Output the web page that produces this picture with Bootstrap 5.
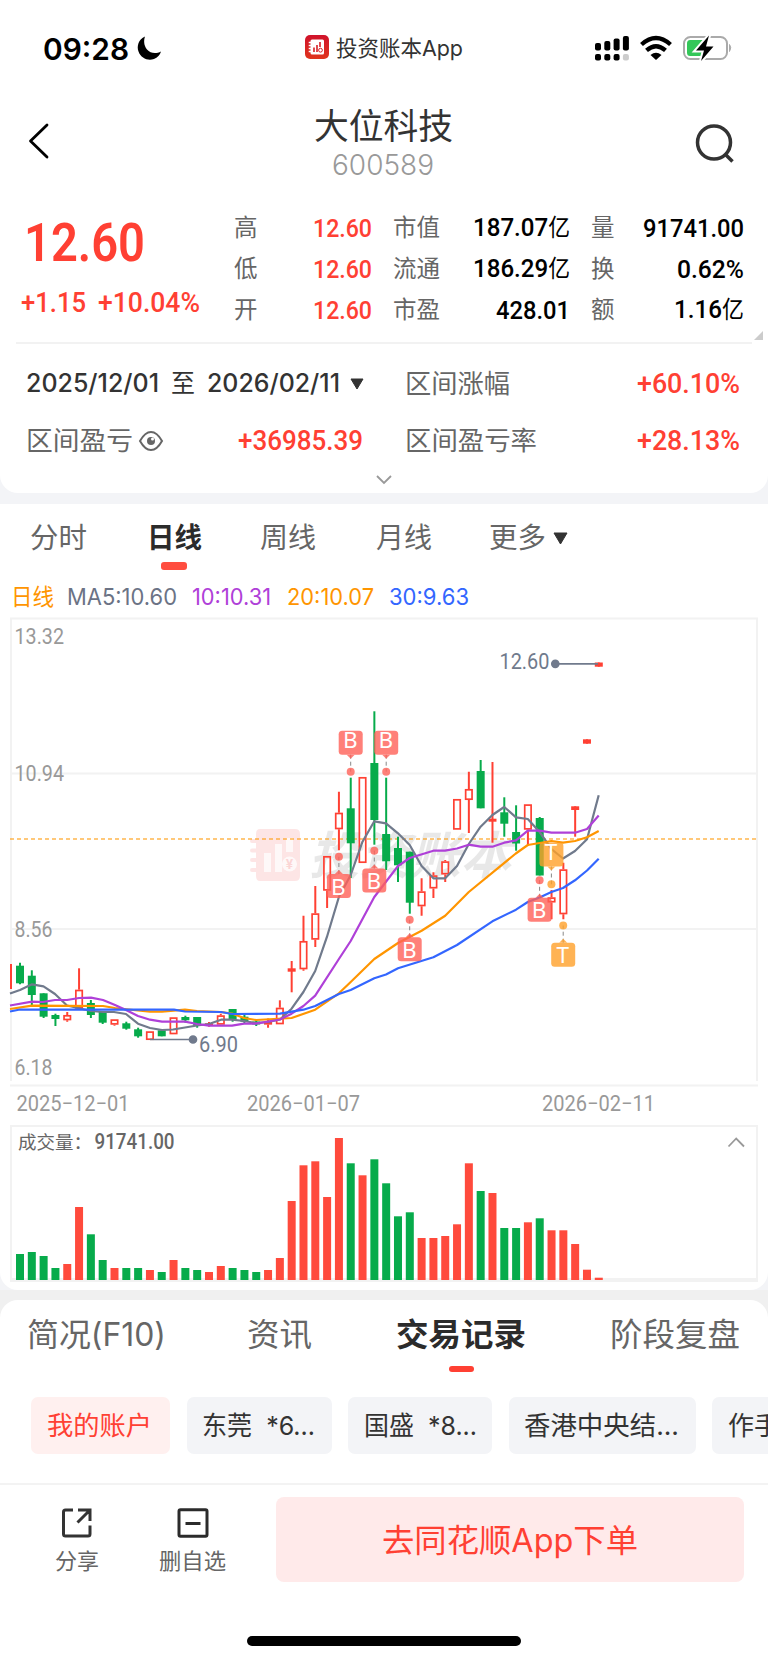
<!DOCTYPE html>
<html lang="zh-CN">
<head>
<meta charset="utf-8">
<meta name="viewport" content="width=device-width, initial-scale=1">
<title>大位科技 600589</title>
<link href="https://cdn.jsdelivr.net/npm/bootstrap@5.3.0/dist/css/bootstrap.min.css" rel="stylesheet">
<style>
:root{--up:#ff4033;--down:#07ab4b;--ink:#333;--mute:#666;--soft:#999}
body{font-family:Inter,"Noto Sans CJK SC",sans-serif;background:#f3f4f7;color:var(--ink);width:768px;height:1663px;overflow:hidden;line-height:1}
svg{display:block;flex:none}
.fit{display:inline-block;white-space:nowrap;transform-origin:0 50%;flex:none}
.num{font-family:Roboto,"Noto Sans CJK SC",sans-serif;font-weight:500}
.up{color:var(--up)}
.line{line-height:40px;height:40px}
.statusbar{height:96px;padding-left:43px;padding-right:35px}
.clock{font-size:30px;font-weight:600;color:#000;padding-top:2px}
.appname{font-size:22px}
.titlebar{height:96px;padding:0 33px 0 28px}
.stockname{font-size:35px;line-height:40px;margin-top:2px}
.stockcode{font-size:28px;line-height:38px;color:var(--soft);font-weight:300}
.panel-top{height:493px;border-radius:0 0 18px 18px}
.quote{height:151px}
.price{font-size:54px;font-weight:600;line-height:60px;margin:21px 0 0 24px}
.change{font-size:28px;gap:12px;margin:16px 0 0 21px}
.quote-left{width:235px}
.quote-grid{display:grid;grid-template-columns:47px 90px 22px 49px 127px 22px 24px 128px;grid-auto-rows:41px;line-height:41px;padding-top:15px;align-items:center;margin-left:-1px}
.quote-grid .k{font-size:23.5px;color:var(--mute)}
.quote-grid .v{font-size:26.5px;color:#000;text-align:right;justify-self:end;margin-right:-1px}
.quote-grid .v.up{color:var(--up)}
.yi{font-size:24px;font-weight:400}
.rule{height:2px;background:#f2f2f2;margin:-1px 16px 0}
.corner{right:5px;top:331px}
.range{display:grid;grid-template-columns:337px 42px 335px;padding-left:26px;height:57px;align-items:center}
.range.first{margin-top:11px}
.range .lbl{font-size:26px;color:var(--mute)}
.range .val{font-size:28px}
.dates{font-size:25px;font-weight:500}
.panel-chart{height:786px;margin-top:11px;border-radius:0 0 18px 18px}
.tabs{height:75px;display:grid;grid-template-columns:117px 113px 116px 113px 1fr;padding-left:30px;font-size:28px;color:var(--mute)}
.tabs>div{height:66px;padding-top:14px}
.tabs .on,.subtabs .on{color:#2b2b2b;font-weight:700}
.tick{width:26px;height:8px;border-radius:3px;background:#ff4d3f;margin:4px 0 0 14px}
.legend-row{height:34px;font-size:23px;line-height:36px;padding-left:11px}
.panel-bottom{height:363px;margin-top:10px;border-radius:18px 18px 0 0}
.panel-gap{background:#f0f0f0}
.subtabs{height:97px;display:grid;grid-template-columns:220px 149px 214px 1fr;padding-left:27px;font-size:32px;color:var(--mute)}
.subtabs>div{padding-top:15px}
.subtabs .tick{width:25px;height:6px;margin:11px 0 0 53px;background:var(--up)}
.chips{gap:16.5px;padding-left:31px;height:57px;width:768px}
.chip{height:57px;line-height:57px;border-radius:7px;background:#f3f4f7;font-size:26px;flex:none;padding-left:15.5px}
.chip.on{background:#fff0ef;color:var(--up)}
.actions{margin-top:29px;border-top:2px solid #f3f3f3;height:99px;padding-left:55px}
.act{font-size:22px;color:var(--mute);padding-top:23px}
.order{width:468px;height:85px;margin-top:12px;border-radius:8px;background:#ffeaea;color:var(--up);font-size:32px;line-height:40px;border:0}
.home{width:274px;height:10px;border-radius:5px;background:#000;margin:54px auto 0 247px}
</style>
</head>
<body>
<section class="panel-top bg-white position-relative">
  <div class="statusbar d-flex align-items-center">
    <span class="clock fit" data-w="86">09:28</span>
    <svg width="26" height="26" viewBox="0 0 26 26" style="margin-left:7px"><path d="M9 1.5C2.5 4.500 .5 11 2.500 16.500C5 23.500 12 26 18 24C21.500 22.700 24 20 25 16.500C20 19 14.500 18.500 11 14.500C7.800 10.500 7.600 5.500 9 1.500Z" fill="#000"/></svg>
    <svg width="24" height="24" viewBox="0 0 24 24" style="margin:-2px 0 0 143px"><defs><linearGradient id="lg" x2="0" y2="1"><stop stop-color="#d0122b"/><stop offset="1" stop-color="#e0341c"/></linearGradient></defs><rect width="24" height="24" rx="5" fill="url(#lg)"/><rect x="5.500" y="4.500" width="13.500" height="15" rx="1.500" fill="#fff"/><path d="M3.700 7.500h3M3.700 10.500h3M3.700 13.500h3M3.700 16.500h3" stroke="#fff" stroke-width="1.300"/><path d="M9 17v-4.500M12 17V10M15 12V7" stroke="#d81f25" stroke-width="1.600"/><circle cx="15.500" cy="15.200" r="1.900" fill="none" stroke="#d81f25"/></svg>
    <span class="appname fit" data-w="127" style="margin-left:7px">投资账本App</span>
    <svg width="138" height="28" viewBox="595 35 138 28" class="ms-auto">
      <g fill="#000"><rect x="595" y="44" width="6" height="7.500" rx="2"/><rect x="604.300" y="42" width="6" height="9.500" rx="2"/><rect x="613.600" y="39.500" width="6" height="12" rx="2"/><rect x="622.900" y="37" width="6" height="14.500" rx="2"/><rect x="595" y="55" width="6" height="6.500" rx="2"/><rect x="604.300" y="55" width="6" height="6.500" rx="2"/><rect x="613.600" y="55" width="6" height="6.500" rx="2"/><rect x="622.900" y="55" width="6" height="6.500" rx="2" fill="#ccc"/></g>
      <g fill="none" stroke="#000" stroke-width="4.300"><path d="M641.500 45.500Q656 32.500 670.500 45.500"/><path d="M646.500 51.300Q656 43 665.500 51.300"/></g><path d="M650.500 56Q656 51.500 661.500 56L656 61Z" fill="#000"/>
      <rect x="684" y="38" width="43" height="22" rx="6.500" fill="none" stroke="#aaa" stroke-width="2"/><path d="M729.500 45.500q2.500 3 0 7z" fill="#aaa" stroke="#aaa"/>
      <path d="M690 41h14v16h-14q-3 0-3-3.500v-9q0-3.500 3-3.500z" fill="#34c759"/>
      <path d="M709 36.500L696 51.500H704L701 62L713.500 47.500H706Z" fill="#000" stroke="#fff" stroke-width="4" paint-order="stroke"/>
    </svg>
  </div>
  <div class="titlebar d-flex justify-content-between align-items-center">
    <svg width="22" height="36" viewBox="0 0 22 36" style="margin-top:-6px"><path d="M19 2L2.500 18L19 34" fill="none" stroke="#000" stroke-width="2.800" stroke-linecap="round" stroke-linejoin="round"/></svg>
    <div class="text-center d-flex flex-column align-items-center" style="margin-left:21px">
      <span class="stockname fit" data-w="139">大位科技</span><span class="stockcode fit" data-w="102">600589</span>
    </div>
    <svg width="40" height="40" viewBox="0 0 40 40"><circle cx="19" cy="18.500" r="16.500" fill="none" stroke="#333" stroke-width="3.500"/><path d="M30.500 30.500L37.500 37.500" stroke="#333" stroke-width="3.500"/></svg>
  </div>
  <div class="quote d-flex">
    <div class="quote-left up num">
      <div class="price"><span class="fit" data-w="121">12.60</span></div>
      <div class="change d-flex"><span class="fit" data-w="65">+1.15</span><span class="fit" data-w="102">+10.04%</span></div>
    </div>
    <div class="quote-grid">
      <span class="k">高</span><span class="v num up fit" data-w="59">12.60</span><span></span><span class="k">市值</span><span class="v num fit" data-w="97">187.07<span class="yi">亿</span></span><span></span><span class="k">量</span><span class="v num fit" data-w="101">91741.00</span>
      <span class="k">低</span><span class="v num up fit" data-w="59">12.60</span><span></span><span class="k">流通</span><span class="v num fit" data-w="97">186.29<span class="yi">亿</span></span><span></span><span class="k">换</span><span class="v num fit" data-w="67">0.62%</span>
      <span class="k">开</span><span class="v num up fit" data-w="59">12.60</span><span></span><span class="k">市盈</span><span class="v num fit" data-w="74">428.01</span><span></span><span class="k">额</span><span class="v num fit" data-w="70">1.16<span class="yi">亿</span></span>
    </div>
  </div>
  <svg class="corner position-absolute" width="9" height="9"><path d="M9 0V9H0Z" fill="#ccc"/></svg>
  <div class="rule"></div>
  <div class="range first">
    <div class="d-flex align-items-center dates"><span class="fit" data-w="133">2025/12/01</span><span class="fit" data-w="24" style="margin:0 12px;font-weight:400">至</span><span class="fit" data-w="133">2026/02/11</span><svg width="14" height="12" style="margin-left:10px"><path d="M1 1H13L7 11Z" fill="#333" stroke="#333" stroke-linejoin="round"/></svg></div><span></span>
    <div class="d-flex justify-content-between align-items-center"><span class="lbl fit" data-w="105">区间涨幅</span><span class="val num up fit" data-w="103">+60.10%</span></div>
  </div>
  <div class="range">
    <div class="d-flex align-items-center"><span class="lbl fit" data-w="107">区间盈亏</span>
      <svg width="26" height="22" viewBox="0 0 26 22" style="margin-left:5px"><path d="M2 11Q7 2 13 2T24 11Q19 20 13 20T2 11Z" fill="none" stroke="#666" stroke-width="2"/><circle cx="13" cy="11" r="4" fill="#666"/><circle cx="14.500" cy="9" r="1.500" fill="#fff"/></svg>
      <span class="val num up fit ms-auto" data-w="125">+36985.39</span></div><span></span>
    <div class="d-flex justify-content-between align-items-center"><span class="lbl fit" data-w="132">区间盈亏率</span><span class="val num up fit" data-w="103">+28.13%</span></div>
  </div>
  <svg width="18" height="10" style="margin:6px auto 0"><path d="M2 1L9 8L16 1" fill="none" stroke="#999" stroke-width="1.800"/></svg>
</section>

<section class="panel-chart bg-white overflow-hidden">
  <div class="tabs line">
    <div><span class="fit" data-w="57">分时</span></div>
    <div><span class="on fit" data-w="55">日线</span><div class="tick"></div></div>
    <div><span class="fit" data-w="56">周线</span></div>
    <div><span class="fit" data-w="56">月线</span></div>
    <div class="d-flex"><span class="fit" data-w="57">更多</span><svg width="15" height="13" style="margin:14px 0 0 7px"><path d="M1 1H14L7.500 12Z" fill="#333" stroke="#333" stroke-linejoin="round"/></svg></div>
  </div>
  <div class="legend-row d-flex">
    <span class="fit" data-w="43" style="color:#ff9500">日线</span>
    <span class="fit" data-w="110" style="color:#6b7385;margin-left:13px">MA5:10.60</span>
    <span class="fit" data-w="79" style="color:#af40d8;margin-left:15px">10:10.31</span>
    <span class="fit" data-w="87" style="color:#ff9500;margin-left:16px">20:10.07</span>
    <span class="fit" data-w="80" style="color:#3366ff;margin-left:15px">30:9.63</span>
  </div>
  <svg id="kline" width="768" height="507" viewBox="0 613 768 507"></svg>
  <svg id="volume" width="768" height="170" viewBox="0 1120 768 170"></svg>
</section>

<div class="panel-gap overflow-hidden"><section class="panel-bottom bg-white overflow-hidden">
  <div class="subtabs line">
    <div><span class="fit" data-w="139">简况(F10)</span></div>
    <div><span class="fit" data-w="65">资讯</span></div>
    <div><span class="on fit" data-w="130">交易记录</span><div class="tick"></div></div>
    <div><span class="fit" data-w="130">阶段复盘</span></div>
  </div>
  <div class="chips d-flex overflow-hidden">
    <div class="chip on" style="width:139px"><span class="fit" data-w="105">我的账户</span></div>
    <div class="chip" style="width:145px"><span class="fit" data-w="113">东莞&nbsp; *6...</span></div>
    <div class="chip" style="width:144px"><span class="fit" data-w="113">国盛&nbsp; *8...</span></div>
    <div class="chip" style="width:187px"><span class="fit" data-w="155">香港中央结...</span></div>
    <div class="chip" style="width:139px"><span class="fit" data-w="104">作手账户</span></div>
  </div>
  <div class="actions d-flex">
    <div class="act d-flex flex-column align-items-center" style="width:44px"><svg width="32" height="30" viewBox="0 0 32 30"><path d="M12 2H4.500Q2.500 2 2.500 4V26Q2.500 28 4.500 28H27Q29 28 29 26V17.500M17 2H29V13M28.500 2.500L16.500 14.500" fill="none" stroke="#333" stroke-width="3"/></svg><span class="fit" data-w="44" style="margin-top:12px">分享</span></div>
    <div class="act d-flex flex-column align-items-center" style="width:67px;margin-left:60px"><svg width="32" height="30" viewBox="0 0 32 30"><rect x="2" y="1.800" width="28" height="26.500" rx="1.500" fill="none" stroke="#2b2b2b" stroke-width="3"/><path d="M8.500 15.500H23.500" stroke="#2b2b2b" stroke-width="3"/></svg><span class="fit" data-w="67" style="margin-top:12px">删自选</span></div>
    <button class="order btn p-0" style="margin-left:50px"><span class="fit" data-w="256" style="margin-top:2px">去同花顺App下单</span></button>
  </div>
  <div class="home"></div>
</section></div>

<script src="https://cdn.jsdelivr.net/npm/bootstrap@5.3.0/dist/js/bootstrap.bundle.min.js"></script>
<script>
// Squeeze or stretch each label to its column width.
document.querySelectorAll('.fit').forEach(el=>{
  el.style.textAlign='left';
  const r=document.createRange();r.selectNodeContents(el);
  const n=r.getBoundingClientRect().width,w=+el.dataset.w;
  el.style.width=w+'px';el.style.transform='scaleX('+w/n+')';
});
const UP='#ff4033',DN='#07ab4b',X=i=>20+11.812*i;
const text=(x,y,w,s,c,o='font-weight="450"')=>`<text x="${x}" y="${y}" textLength="${w}" lengthAdjust="spacingAndGlyphs" font-family="Roboto,sans-serif" font-size="21.500" fill="${c}" ${o}>${s}</text>`;

// [direction, high, top, bottom, low]; u hollow, U filled, d falling
const K=[['d',962.7,965.7,983.3,984.3],['d',970.3,975.7,995,1005.3],['d',993.3,993.3,1016.7,1018],['d',1013.7,1015,1019,1026],['u',1012,1015,1020.3,1021.7],['u',968.3,989.7,1008.7,1008.7],['d',1000,1003,1015,1018],['d',1012,1012,1022.7,1024],['u',1019.3,1019.3,1024.7,1025.7],['d',1021.7,1023.3,1028.7,1029.7],['d',1027.7,1029.3,1036.3,1037.7],['u',1031.3,1031.3,1040,1040],['d',1030.3,1030.3,1036.3,1036.3],['u',1017.3,1017.3,1034.3,1034.3],['d',1015.7,1017,1020.3,1022.7],['d',1017,1017,1026,1027.7],['U',1022,1023.3,1025.7,1026.7],['u',1013.7,1015.3,1024.7,1024.7],['d',1009,1009,1019.7,1021.7],['d',1014.5,1016.7,1021.7,1024],['d',1020,1021.5,1024.5,1026],['u',1018.5,1021.3,1024.6,1027.7],['u',1000.3,1007.7,1024.3,1024.3],['U',961,968.3,971.7,992.3],['u',915.7,941,969.3,970.7],['u',886,913.3,939.7,947],['u',856,856,890.7,908],['u',791.7,812.7,829.3,850.3],['d',777.7,808.3,843.3,878],['u',777,777,863,863],['d',711.3,763,820,844.7],['d',777.7,834,861.3,870],['d',836.7,848,865.3,882],['d',851.7,851.7,902.7,913.7],['u',878.3,891.3,906.3,915.7],['u',872.3,875.3,888.5,898],['u',860,861.3,874.5,882],['u',799,799,829.7,829.7],['u',771.7,789,800,833],['d',760,771,808.3,808.3],['U',762,818.7,821.7,842.7],['d',797.3,812.3,823.7,836.7],['d',805.3,832,843.5,850.7],['u',804.3,804.3,829.7,846],['d',817,818,875.5,875.5],['u',890,897.3,902.5,919.3],['u',862.7,869.3,914.3,919.3],['U',806.3,806.3,810,836.7],['U',739.3,739.3,743.7,743.7],['U',662.5,662.5,666.7,666.7]];
let s='<g fill="none" stroke="#f2f2f2" stroke-width="2"><path d="M11 1081V618.500H757V1081M10 1085.500H758M11 773.500H757M11 929H757"/></g>';
s+='<g opacity=".11"><path d="M260 829H295Q300 829 300 834V876Q300 881 295 881H260Q256 881 256 876V834Q256 829 260 829Z" fill="#e22"/><path d="M252 841h8M252 850.500h8M252 860h8M252 870h8" stroke="#e22" stroke-width="4" stroke-linecap="round"/></g><g fill="#fff" opacity=".75"><rect x="264" y="853" width="7" height="19"/><rect x="275" y="844" width="7" height="28"/><rect x="286" y="838" width="7" height="14"/><circle cx="289.500" cy="864" r="7.500"/></g>';
s+='<text x="289.500" y="869" text-anchor="middle" font-family="Inter,sans-serif" font-weight="700" font-size="13" fill="#fbd5d5">¥</text>';
s+='<text x="309" y="874" textLength="202" lengthAdjust="spacingAndGlyphs" font-family="Noto Sans CJK SC,sans-serif" font-weight="700" font-style="italic" font-size="51" fill="#000" opacity=".085">投资账本</text>';
s+='<path d="M10 839H758" stroke="#ff9500" stroke-opacity=".7" stroke-width="1.500" stroke-dasharray="4 3"/>';
s+=text(14.500,644,49.5,'13.32','#999')+text(14.500,780.500,49.5,'10.94','#999')+text(14.500,936.500,38,'8.56','#999')+text(14.500,1075,38,'6.18','#999');
s+=text(16.500,1111,113,'2025−12−01','#999')+text(247,1111,113,'2026−01−07','#999')+text(542,1111,113,'2026−02−11','#999');
s+=`<rect x="10" y="964" width="2" height="25" fill="${UP}"/>`;
K.forEach((k,i)=>{
  const x=X(i),c=k[0]=='d'?DN:UP;
  if(k[0]=='u'){
    s+=`<path d="M${x} ${k[1]}V${k[2]}M${x} ${k[3]}V${k[4]}" stroke="${c}" stroke-width="2"/><rect x="${x-3.2}" y="${k[2]+.8}" width="6.400" height="${k[3]-k[2]-1.6}" fill="none" stroke="${c}" stroke-width="1.700"/>`;
  }else s+=`<path d="M${x} ${k[1]}V${k[4]}" stroke="${c}" stroke-width="2"/><rect x="${x-4}" y="${k[2]}" width="8" height="${k[3]-k[2]}" fill="${c}"/>`;
});
const MA=[
['#707a8c','10,993.5 20,990 32,984.3 43.5,986.3 55,994 67,1005.5 79,1008.3 91,1011 103,1012 114,1012 126,1014 138,1023.7 150,1028 162,1030 173,1029.5 185,1027.5 197,1025.5 209,1024 221,1019.7 232,1019.7 244,1021 256,1023 268,1022 280,1019.5 291.6,1008.7 303.4,992 315.2,971 327,936.7 338.9,897 350.7,875 362.5,841.7 374.3,821.3 386,823.3 398,833.3 409.7,845 421.6,866 433.4,878.3 445.2,878.3 457,866 468.8,844 480.6,826.7 492.4,815 504.2,807 516,817.3 527.8,819 539.6,832 551.4,849 563,858.5 575,851 587,839.3 598.7,795.3'],
['#ff9500','10,1009 32,1005.7 103,1006 115,1008 138,1010.5 150,1011.7 162,1011.7 185,1009.7 197,1011 221,1012 232,1013.5 244,1018 256,1020 291.6,1018 315.2,1009.7 338.9,993.3 350.7,982 374.3,959 398,943 421.6,930.7 445.2,915.7 468.8,892 515.8,853.5 527.8,845 551.4,841 563,842.7 575,841 587,837.3 598.7,831'],
['#af40d8','10,1005.5 32,1001.7 43,1002 55,1000 67,1000 79,998 91,997.7 103,1000 115,1005 126,1010 138,1016 150,1019.7 162,1021.7 185,1021.7 197,1024 209,1025.7 232,1025.7 244,1023.7 256,1023.7 280,1019.5 291.6,1013.7 303.4,1006 315.2,995.7 338.9,959 350.7,941 374.3,897 398,866 409.7,858 433.4,850.7 445,850.7 457,848.5 468.8,844.7 480.6,846.7 492.4,846.7 504.2,842.7 516,840.3 527.8,830.7 539.6,830.7 551.4,832.7 575,832.7 587,829 598.7,815.5'],
['#3366ff','10,1011.5 20,1009.5 174,1009.7 185,1011.5 221,1012 232,1014 280,1013.7 303.4,1009.7 315.2,1006 338.9,994 350.7,990 374.3,978.3 386,974.5 398,968.3 433.4,957.3 457,945 492.4,921.3 516,909.7 527.8,902 539.6,897.5 551.4,892 563,888 575,880.3 587,870.5 598.7,858.7']];
MA.forEach(m=>s+=`<polyline points="${m[1]}" fill="none" stroke="${m[0]}" stroke-width="2.200" stroke-linejoin="round"/>`);
s+='<g fill="#707a8c" stroke="#707a8c" stroke-width="1.700"><circle cx="555.300" cy="663.800" r="3.500"/><path d="M555 663.800H598"/><circle cx="193" cy="1039.500" r="3.500"/><path d="M150 1039.500H193"/></g>';
s+=text(499.500,668.500,50,'12.60','#707a8c')+text(199,1052,39,'6.90','#707a8c');
// trade markers: letter, x, box top, dot y
[['B',350.7,730.7,771.7],['B',386.2,730.7,771.7],['B',338.9,874,856.7],['B',374.3,868.5,850.7],['B',409.7,937.3,919.7],['B',539.6,897.8,880.2],['T',551.4,842.5,884.3],['T',563.2,942.7,925.5]].forEach(([l,x,y,d])=>{
  const c=l=='B'?'#ff6158':'#ffa12a',down=d>y;
  s+=`<path d="M${x} ${down?y+24:y}V${d}" stroke="#888" stroke-width="1" stroke-dasharray="4 3"/><g fill="${c}" opacity=".8"><rect x="${x-12}" y="${y}" width="24" height="24" rx="3.500"/><path d="M${x-4} ${down?y+24:y}L${x} ${down?y+28:y-4}L${x+4} ${down?y+24:y}Z"/><circle cx="${x}" cy="${d}" r="4"/></g>`;
  s+=`<text x="${x-.5}" y="${y+(down?17.5:20.5)}" text-anchor="middle" font-family="Noto Sans,sans-serif" font-size="22.500" fill="#fff">${l}</text>`;
});
document.getElementById('kline').innerHTML=s;

const V='g26 g28 g24 g12 r16 r73 g45.7 g20 r12 g12 g12 r10 g8 r20 g12 g10 r8 r14 g12 g10 g8 r10 r22 r79 r114.7 r118.7 r83 r142 g116.7 r104.7 g120.7 g96.7 g63.7 g67.7 r42 r42 r44 r55.7 r116.7 g89 r87 g52 g52 r57.7 g61.7 r49.7 r49.7 r36 r10.3 r2.3'.split(' ');
s='<path d="M11 1126H757V1281H11ZM11 1279H757" fill="none" stroke="#f2f2f2" stroke-width="2"/>';
V.forEach((v,i)=>{const h=+v.slice(1);s+=`<rect x="${X(i)-4}" y="${1280-h}" width="8" height="${h}" fill="${v[0]=='g'?DN:'#ff4a3c'}"/>`});
s+='<text x="18" y="1148.500" textLength="74" font-family="Noto Sans CJK SC,sans-serif" font-size="18.500" fill="#666">成交量：</text>'+text(94.500,1149,80,'91741.00','#666','font-weight="500"');
s+='<path d="M728.500 1146.500L736.200 1138.500L744 1146.500" fill="none" stroke="#999" stroke-width="1.800"/>';
document.getElementById('volume').innerHTML=s;
</script>
</body>
</html>
